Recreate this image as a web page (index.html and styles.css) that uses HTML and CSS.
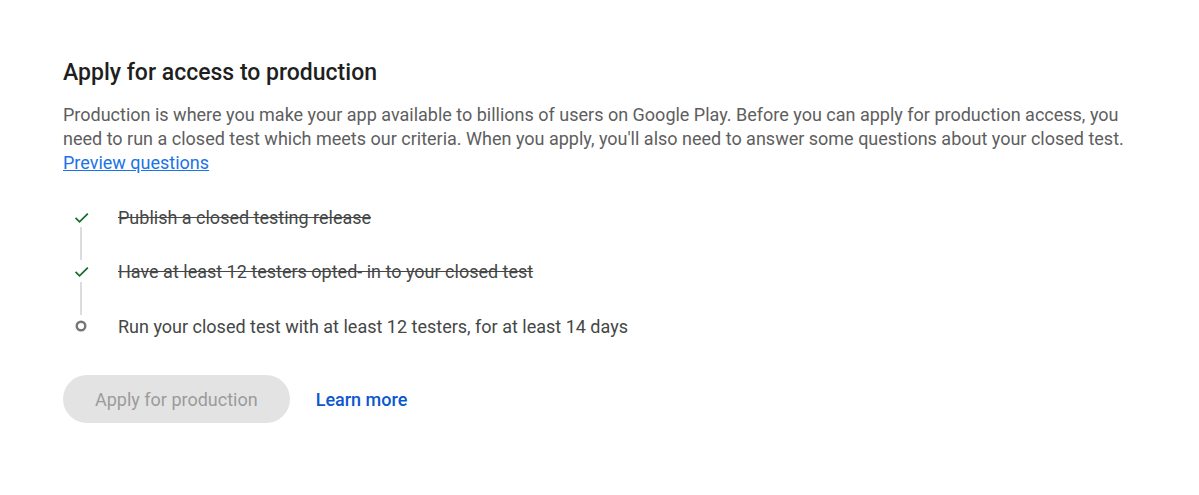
FILE: index.html
```html
<!DOCTYPE html>
<html lang="en">
<head>
  <meta charset="UTF-8" />
  <title>Apply for access to production</title>
  <link rel="stylesheet" href="styles.css">
</head>
<body>
  <section class="panel">
    <h2 class="panel-title">Apply for access to production</h2>
    <p class="panel-desc">
      Production is where you make your app available to billions of users on Google Play. Before you can apply for production access, you
      need to run a closed test which meets our criteria. When you apply, you'll also need to answer some questions about your closed test.
      <br><a href="#" class="link">Preview questions</a>
    </p>

    <!-- Checklist -->
    <ul class="steps">
      <li class="step done">
        <span class="step-icon">
          <svg width="19" height="19" viewBox="0 0 24 24"><path d="M4.5 12.5l5 5L20 7" fill="none" stroke="#146c2e" stroke-width="2.2"/></svg>
        </span>
        <span class="step-text">Publish a closed testing release</span>
      </li>
      <li class="step done">
        <span class="step-icon">
          <svg width="19" height="19" viewBox="0 0 24 24"><path d="M4.5 12.5l5 5L20 7" fill="none" stroke="#146c2e" stroke-width="2.2"/></svg>
        </span>
        <span class="step-text">Have at least 12 testers opted- in to your closed test</span>
      </li>
      <li class="step">
        <span class="step-icon">
          <svg width="14" height="14" viewBox="0 0 14 14"><circle cx="7" cy="7" r="4.3" fill="none" stroke="#747775" stroke-width="2.4"/></svg>
        </span>
        <span class="step-text">Run your closed test with at least 12 testers, for at least 14 days</span>
      </li>
    </ul>

    <div class="actions">
      <button class="btn-disabled" disabled>Apply for production</button>
      <a href="#" class="btn-text">Learn more</a>
    </div>
  </section>
</body>
</html>
```

FILE: styles.css
```css
body {
  margin: 0;
  background-color: #fff;
  font-family: Roboto, "Noto Sans", sans-serif;
  color: #1f1f1f;
}

.panel {
  max-width: 1085px;
  padding: 59px 0 0 63px;
}

.panel-title {
  font-size: 23px;
  font-weight: 500;
  line-height: 28px;
  margin: 0 0 16px 0;
  color: #1f1f1f;
}

.panel-desc {
  font-size: 18px;
  line-height: 24px;
  color: #5e5e5e;
  margin: 0;
}

.link {
  color: #1a73e8;
  text-decoration: underline;
}

/* Checklist */
.steps {
  list-style: none;
  margin: 30px 0 0 0;
  padding: 0;
}

.step {
  position: relative;
  display: flex;
  align-items: center;
  height: 24px;
  margin-bottom: 30.5px;
}

.step:last-child {
  margin-bottom: 0;
}

/* connector line */
.step.done::after {
  content: "";
  position: absolute;
  left: 17px;
  top: 22px;
  width: 2px;
  height: 33px;
  background-color: #dadce0;
}

.step-icon {
  width: 36px;
  display: flex;
  justify-content: center;
  align-items: center;
  margin-right: 19px;
}

.step-text {
  font-size: 18px;
  color: #444746;
}

.step.done .step-text {
  text-decoration: line-through;
}

.actions {
  display: flex;
  align-items: center;
  margin-top: 37px;
}

.btn-disabled {
  height: 48px;
  padding: 0 32px;
  border: none;
  border-radius: 24px;
  background-color: #e3e3e3;
  color: #9b9b9b;
  font-family: inherit;
  font-size: 18px;
  font-weight: 400;
  margin-right: 26px;
}

.btn-text {
  color: #0b57d0;
  font-size: 18px;
  font-weight: 500;
  text-decoration: none;
}
```
